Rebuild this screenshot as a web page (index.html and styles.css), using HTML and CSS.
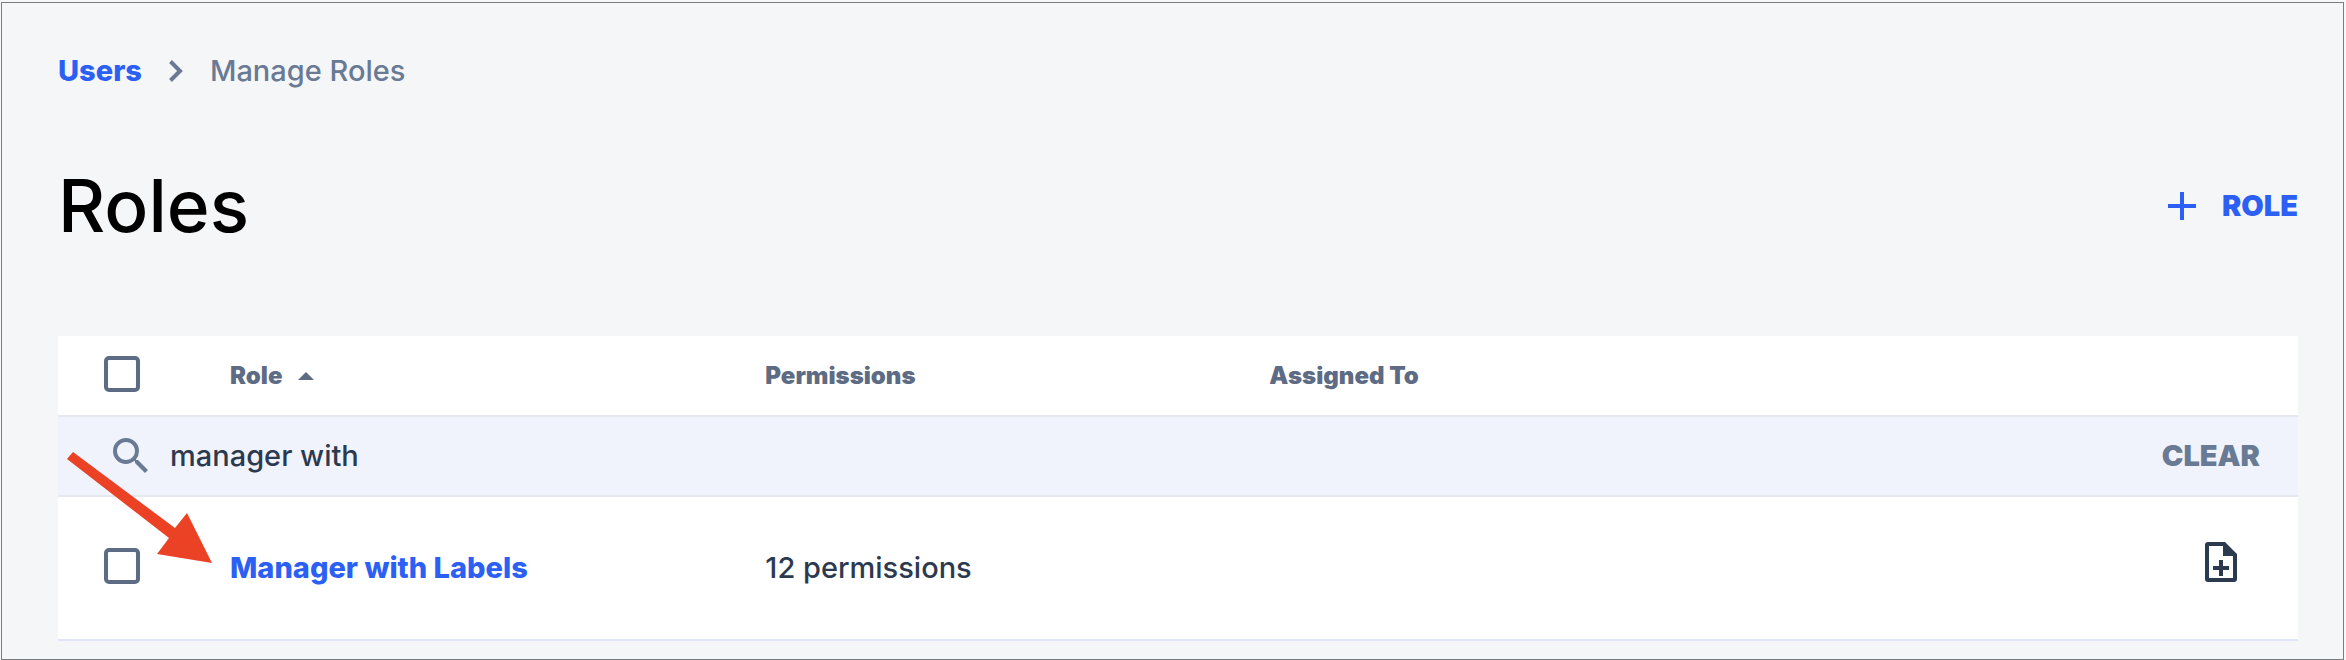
FILE: index.html
```html
<!DOCTYPE html>
<html lang="en">
<head>
    <meta charset="utf-8">
    <title>Manage Roles</title>
    <meta name="viewport" content="width=device-width, initial-scale=1.0">
    <link rel="stylesheet" href="styles.css">
</head>
<body>
    <main class="page">
        <nav class="breadcrumb" aria-label="Breadcrumb">
            <a href="#">Users</a>
            <svg class="chevron" viewBox="0 0 14 22" aria-hidden="true"><path d="M1.500 1.500 11 11l-9.500 9.500" fill="none" stroke="currentColor" stroke-width="4"/></svg>
            <span>Manage Roles</span>
        </nav>

        <div class="title-bar">
            <h1>Roles</h1>
            <button class="add-btn" type="button">
                <svg viewBox="0 0 28 28" aria-hidden="true"><path d="M12 0h4v12h12v4H16v12h-4V16H0v-4h12z" fill="currentColor"/></svg>
                ROLE
            </button>
        </div>

        <table class="roles">
            <colgroup>
                <col class="col-check">
                <col class="col-role">
                <col class="col-permissions">
                <col>
            </colgroup>
            <thead>
                <tr>
                    <th class="check-cell"><input type="checkbox" aria-label="Select all roles"></th>
                    <th>
                        <button class="sort-btn" type="button">
                            Role
                            <svg viewBox="0 0 16 8" aria-hidden="true"><path d="M0 8 8 0l8 8z" fill="currentColor"/></svg>
                        </button>
                    </th>
                    <th>Permissions</th>
                    <th>Assigned To</th>
                </tr>
            </thead>
            <tbody>
                <tr class="search-row">
                    <td colspan="4">
                        <form class="search">
                            <label for="role-search" aria-label="Search roles">
                                <svg viewBox="0 0 24 24" aria-hidden="true"><path d="M15.500 14h-.79l-.28-.27A6.471 6.471 0 0 0 16 9.500 6.500 6.500 0 1 0 9.500 16c1.610 0 3.090-.59 4.230-1.570l.27.28v.79l5 4.990L20.490 19l-4.990-5zm-6 0C7.010 14 5 11.990 5 9.500S7.010 5 9.500 5 14 7.010 14 9.500 11.990 14 9.500 14z" fill="currentColor"/></svg>
                            </label>
                            <input id="role-search" type="text" value="manager with">
                            <button class="clear-btn" type="reset">CLEAR</button>
                        </form>
                    </td>
                </tr>
                <tr class="role-row">
                    <td class="check-cell"><input type="checkbox" aria-label="Select Manager with Labels"></td>
                    <td><a href="#">Manager with Labels</a></td>
                    <td>12 permissions</td>
                    <td class="action-cell">
                        <button class="copy-btn" type="button" aria-label="Duplicate role">
                            <svg viewBox="0 0 24 24" aria-hidden="true"><path fill-rule="evenodd" d="M5.500 2H14l6 6v12.500a1.500 1.500 0 0 1-1.500 1.500h-13A1.500 1.500 0 0 1 4 20.500v-17A1.500 1.500 0 0 1 5.500 2zM6 4v16h12V9h-5V4zM11 11h2v3h3v2h-3v3h-2v-3H8v-2h3z" fill="currentColor"/></svg>
                        </button>
                    </td>
                </tr>
            </tbody>
        </table>

        <!-- Arrow pointing at the matching role -->
        <svg class="arrow" viewBox="0 0 145 111" aria-hidden="true"><path d="M0 7 6 0l102 76 12-15 25 50-55-9 12-16z" fill="#eb4226"/></svg>
    </main>
</body>
</html>
```
FILE: styles.css
```css
* {
    box-sizing: border-box;
}
body {
    font-family: Inter, "Liberation Sans", sans-serif;
    font-size: 29px;
    font-weight: 500;
    line-height: 40px;
    color: #2c3a50;
    background-color: #f5f7f8;
    margin: 0;
    padding: 2px 2px 0 1px;
}
a {
    color: #2c60f5;
    font-weight: 800;
    text-decoration: none;
}
button {
    font: inherit;
    color: inherit;
    background: none;
    border: none;
    padding: 0;
    cursor: pointer;
}
svg {
    display: block;
    flex: none;
}
.page {
    position: relative;
    min-height: calc(100vh - 2px);
    padding: 48px 45px 16px 56px;
    background-color: #f5f6f8;
    border: 1px solid #7a7d80;
}
.breadcrumb {
    display: flex;
    align-items: center;
    gap: 27px;
    color: #697a94;
}
.chevron {
    width: 14px;
    height: 22px;
}
.title-bar {
    display: flex;
    justify-content: space-between;
    align-items: center;
    margin: 70px 0 85px;
}
h1 {
    font-size: 73px;
    font-weight: 500;
    line-height: 90px;
    color: #000;
    margin: 0;
}
.add-btn {
    display: flex;
    align-items: center;
    gap: 26px;
    color: #2c60f5;
    font-weight: 900;
}
.add-btn svg {
    width: 28px;
    height: 28px;
}
.roles {
    width: 100%;
    table-layout: fixed;
    border-collapse: separate;
    border-spacing: 0;
    background-color: #fff;
}
.col-check {
    width: 172px;
}
.col-role {
    width: 23.9%;
}
.col-permissions {
    width: 22.5%;
}
th, td {
    padding: 0;
    text-align: left;
    border-bottom: 2px solid #e5e8ec;
}
th {
    height: 81px;
    color: #5d6b84;
    font-size: 24px;
    font-weight: 900;
}
.sort-btn {
    display: flex;
    align-items: center;
    gap: 16px;
}
.sort-btn svg {
    width: 16px;
    height: 8px;
}
.check-cell {
    padding-left: 46px;
}
.check-cell input {
    appearance: none;
    display: block;
    width: 36px;
    height: 36px;
    margin: 0 0 4px;
    background-color: #fff;
    border: 4px solid #5d6b84;
    border-radius: 5px;
}
.search-row td {
    height: 80px;
    background-color: #f0f3fc;
}
.search {
    display: flex;
    align-items: center;
    gap: 15px;
    padding: 0 38px 0 49px;
    margin: 0;
    color: #697a94;
}
.search svg {
    width: 48px;
    height: 48px;
}
.search input {
    flex: 1;
    min-width: 0;
    padding: 0;
    font: inherit;
    color: #2c3a50;
    background: none;
    border: none;
    outline: none;
}
.clear-btn {
    font-weight: 900;
}
.role-row td {
    height: 144px;
    border-bottom-color: #dfe6fa;
}
.action-cell {
    padding-right: 53px;
}
.copy-btn {
    display: block;
    margin-left: auto;
    padding-bottom: 12px;
}
.copy-btn svg {
    width: 48px;
    height: 48px;
}
.arrow {
    position: absolute;
    left: 65px;
    top: 449px;
    width: 145px;
    height: 111px;
}
```
